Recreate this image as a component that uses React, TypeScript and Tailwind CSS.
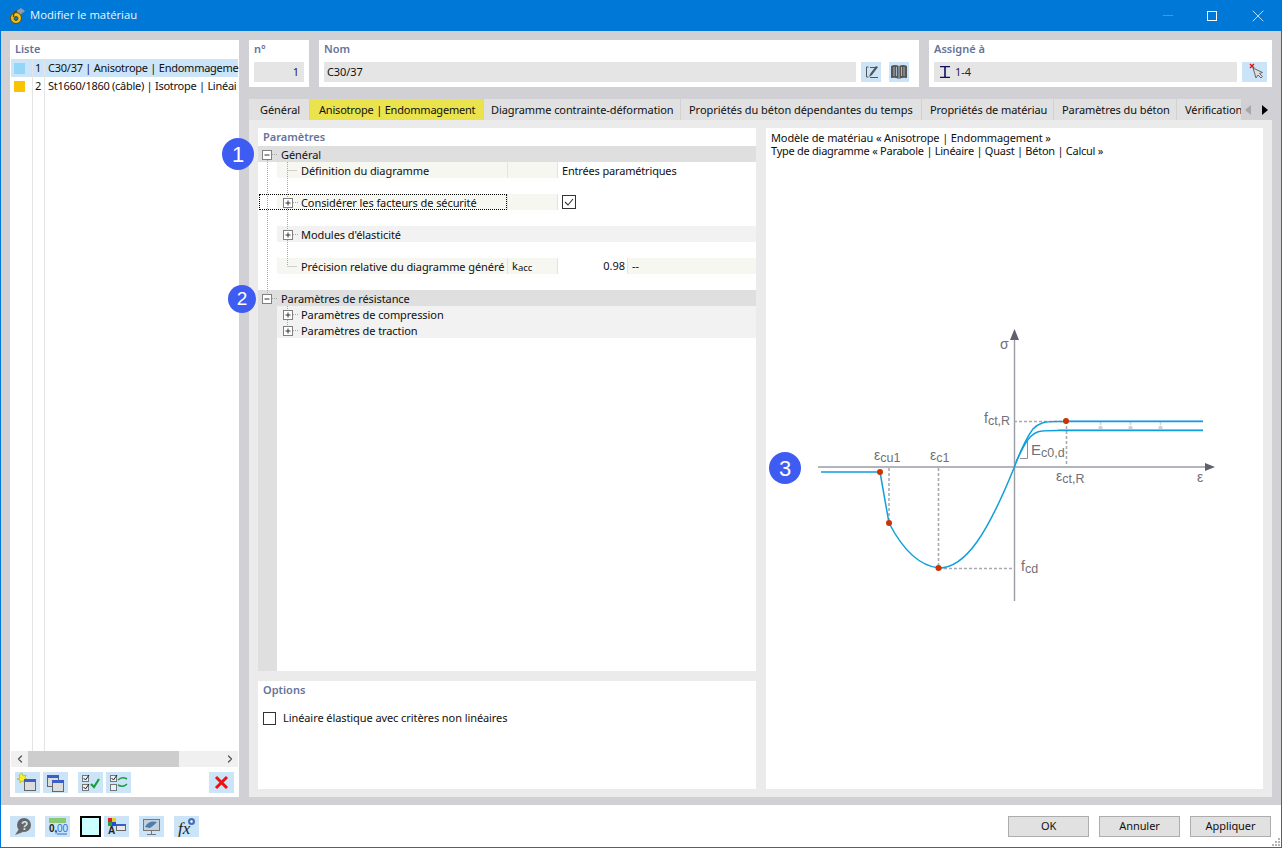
import type { ReactNode } from "react";
import { X, ChevronLeft, ChevronRight } from "lucide-react";

const font = "font-['Noto_Sans','Open_Sans',sans-serif]";

function IconBtn({ children, className = "" }: { children: ReactNode; className?: string }) {
  return (
    <div className={`w-[25px] h-[21px] bg-[#cbe4f8] flex items-center justify-center shrink-0 ${className}`}>
      <svg width="25" height="21" viewBox="0 0 25 21">
        {children}
      </svg>
    </div>
  );
}

function SmallWindow({ x, y }: { x: number; y: number }) {
  return (
    <g>
      <rect x={x + 0.5} y={y + 0.5} width="11" height="11" fill="#dcdcdc" stroke="#666" />
      <rect x={x} y={y} width="12" height="3" fill="#3a5fc8" />
    </g>
  );
}

function SmallCheck({ x, y, on = true }: { x: number; y: number; on?: boolean }) {
  return (
    <g>
      <rect x={x + 0.5} y={y + 0.5} width="6" height="6" fill="#e8f2fa" stroke="#777" />
      {on && <path d={`M${x + 1.5} ${y + 3}l2 2 3.5-5`} fill="none" stroke="#222" />}
    </g>
  );
}

function Section({ label, className = "" }: { label: string; className?: string }) {
  return <div className={`text-[11px] leading-[15px] font-semibold text-[#65739b] ${className}`}>{label}</div>;
}

function TreeName({ children }: { children: ReactNode }) {
  return <span className="text-[11px] tracking-[-0.08px] whitespace-nowrap text-[#101010] pt-[2px]">{children}</span>;
}

function SubRow({ name, sym, value, focus = false }: { name: string; sym?: ReactNode; value?: ReactNode; focus?: boolean }) {
  return (
    <div className="h-4 flex items-center relative">
      <div className="w-[19px] h-full shrink-0" />
      <div className="w-[231px] h-full bg-[#f7f7f2] pl-6 flex items-center border-r border-[#e4e4e0] shrink-0">
        <TreeName>{name}</TreeName>
      </div>
      <div className="w-[50px] h-full bg-[#f7f7f2] pl-[4px] flex items-center border-r border-[#e4e4e0] shrink-0">{sym}</div>
      {value}
      {focus && <div className="absolute left-[1px] top-0 w-[248px] h-4 border border-dotted border-black" />}
    </div>
  );
}

function GroupRow({ name, gutter = "" }: { name: string; gutter?: string }) {
  return (
    <div className="h-4 flex">
      <div className={`w-[19px] h-full ${gutter}`} />
      <div className="flex-1 h-full bg-[#f2f2f2] pl-6 flex items-center">
        <TreeName>{name}</TreeName>
      </div>
    </div>
  );
}

function Head({ name }: { name: string }) {
  return (
    <div className="h-4 bg-[#dfdfdf] pl-[23px] flex items-center">
      <TreeName>{name}</TreeName>
    </div>
  );
}

function Badge({ n, className }: { n: number; className: string }) {
  return (
    <div className={`absolute rounded-full bg-[#3f5cf2] text-white font-['Liberation_Sans',sans-serif] flex items-center justify-center ${className}`}>
      {n}
    </div>
  );
}

function TreeLines() {
  const dots = "#a8a8a8";
  const box = (x: number, y: number, plus: boolean) => (
    <g key={`${x}-${y}`}>
      <rect x={x + 0.5} y={y + 0.5} width="9" height="9" fill="#fff" stroke="#808080" />
      <path d={`M${x + 2.5} ${y + 5}h5`} stroke="#333" />
      {plus && <path d={`M${x + 5} ${y + 2.5}v5`} stroke="#333" />}
    </g>
  );
  return (
    <svg className="absolute left-0 top-[18px] pointer-events-none" width="60" height="200" viewBox="258 146 60 200">
      <g stroke={dots} strokeDasharray="1 1" fill="none">
        <path d="M267.5 160V294M272 154.5h6M272 298.5h6" />
        <path d="M287.5 162V266M287.5 170.5h10M293 202.5h5M293 234.5h5M287.5 266.5h10" />
        <path d="M287.5 306V326M293 314.5h5M293 330.5h5" />
      </g>
      {box(262, 150, false)}
      {box(262, 294, false)}
      {box(283, 198, true)}
      {box(283, 230, true)}
      {box(283, 310, true)}
      {box(283, 326, true)}
    </svg>
  );
}

function Diagram() {
  const lab = "#707078";
  const dash = "#a9a9b2";
  return (
    <svg width="440" height="290" viewBox="790 320 440 290" className="ml-[24px] mt-[163px] shrink-0" fontFamily="Liberation Sans, sans-serif" fill={lab}>
      <path d="M818 467H1206" stroke="#9b9ba6" strokeWidth="1.4" />
      <path d="M1205 463l10 4-10 4z" fill="#60606f" />
      <path d="M1014.5 601V338" stroke="#9b9ba6" strokeWidth="1.4" />
      <path d="M1014.5 329l4.5 11h-9z" fill="#60606f" />
      <g stroke={dash} strokeDasharray="3 2" strokeWidth="1.6" fill="none">
        <path d="M889 468V523M938.5 468V568M939 568.5H1014M1014 421.5H1066M1066.5 421V467" />
        <path d="M1100.5 422V430M1130.5 422V430M1160.5 422V430" stroke="#d4d4d8" />
      </g>
      <g fill="#d0d0d5">
        <circle cx="1100.5" cy="428" r="2.2" />
        <circle cx="1130.5" cy="428" r="2.2" />
        <circle cx="1160.5" cy="428" r="2.2" />
      </g>
      <path d="M1027.5 441V458.5H1020" fill="none" stroke="#8d8d98" />
      <g fill="none" stroke="#119fdc" strokeWidth="1.5">
        <path d="M821 472H880L889 523C904 552 920 566 939 568C966 568 988 532 1014 468C1020 452 1026 438 1033 429C1039 423 1044 421.5 1056 421.5H1203" />
        <path d="M1016 462C1022 450 1028 432 1042 431C1047 430.5 1052 430.5 1058 430.5H1203" />
      </g>
      <path d="M1066 420.5H1203M1058 429.5H1203" stroke="#7cc7ec" fill="none" />
      <g fill="#cc3300">
        <circle cx="880" cy="472" r="3" />
        <circle cx="889" cy="523" r="3" />
        <circle cx="938.5" cy="568" r="3" />
        <circle cx="1066" cy="421" r="3" />
      </g>
      <g fontSize="14">
        <text x="1000" y="349">σ</text>
        <text x="984" y="423">f<tspan fontSize="12.5" dy="2">ct,R</tspan></text>
        <text x="874" y="460">ε<tspan fontSize="12.5" dy="2">cu1</tspan></text>
        <text x="930" y="460">ε<tspan fontSize="12.5" dy="2">c1</tspan></text>
        <text x="1031" y="455" fontSize="15">E<tspan fontSize="12.5" dy="2">c0,d</tspan></text>
        <text x="1056" y="481">ε<tspan fontSize="12.5" dy="2">ct,R</tspan></text>
        <text x="1197" y="482">ε</text>
        <text x="1021" y="571">f<tspan fontSize="12.5" dy="2">cd</tspan></text>
      </g>
    </svg>
  );
}

const tabs = [
  { label: "Général", w: "w-[61px] pl-[11px] tracking-[-0.08px]" },
  { label: "Anisotrope | Endommagement", w: "w-[174px] pl-[9px] tracking-[-0.2px]", active: true },
  { label: "Diagramme contrainte-déformation", w: "w-[197px] pl-[7px] tracking-[-0.08px]" },
  { label: "Propriétés du béton dépendantes du temps", w: "w-[241px] pl-[8px] tracking-[-0.05px]" },
  { label: "Propriétés de matériau", w: "w-[132px] pl-[8px] tracking-[-0.08px]" },
  { label: "Paramètres du béton", w: "w-[123px] pl-[8px] tracking-[-0.08px]" },
  { label: "Vérification", w: "w-[65px] pl-[8px] tracking-[-0.08px]" },
];

export default function App() {
  return (
    <div className={`w-[1282px] h-[848px] relative flex flex-col border border-t-0 border-[#0078d7] bg-white text-[#101010] overflow-hidden ${font}`}>
      {/* Title bar */}
      <div className="h-[31px] bg-[#0078d7] flex items-center shrink-0 pl-2 pr-[13px]">
        <svg width="18" height="18" viewBox="0 0 18 18">
          <path d="M6 5l6-4 4 3-5 4z" fill="#8d9bb0" />
          <circle cx="7" cy="11" r="5.5" fill="#f0c020" stroke="#5d4a00" />
          <circle cx="7" cy="11.5" r="2" fill="#0078d7" stroke="#5d4a00" />
          <path d="M8 4Q4 5 4.5 10" fill="none" stroke="#5d4a00" strokeWidth="1.4" />
        </svg>
        <span className="ml-[3px] text-[11.3px] text-[#eef6fd] font-['Open_Sans',sans-serif]">Modifier le matériau</span>
        <div className="ml-auto flex items-center">
          <div className="w-[10px] h-px bg-[#3b9be3] mr-[34px]" />
          <div className="w-[10px] h-[10px] border border-white mr-[31px]" />
          <X size={20} strokeWidth={0.9} color="#fff" />
        </div>
      </div>

      {/* Body */}
      <div className="h-[774px] bg-[#d1d0d5] flex gap-[10px] pl-[9px] pr-[9px] pt-[9px] pb-2 shrink-0">
        {/* Liste */}
        <div className="w-[229px] bg-white flex flex-col px-px">
          <Section label="Liste" className="h-[19px] pl-[4px] pt-[1px]" />
          <div className="flex-1 relative">
            <div className="h-[18px] bg-[#cce4f7] flex items-center relative text-[11px] tracking-[-0.25px] whitespace-nowrap">
              <div className="w-[11px] h-[11px] bg-[#94d6f7] ml-[3px] shrink-0" />
              <span className="w-[14px] ml-[2px] text-right shrink-0">1</span>
              <span className="ml-[7px]">C30/37 | Anisotrope | Endommageme</span>
            </div>
            <div className="h-[18px] flex items-center relative text-[11px] tracking-[-0.27px] whitespace-nowrap">
              <div className="w-[11px] h-[11px] bg-[#f8c300] ml-[3px] shrink-0" />
              <span className="w-[14px] ml-[2px] text-right shrink-0">2</span>
              <span className="ml-[7px]">St1660/1860 (câble) | Isotrope | Linéai</span>
            </div>
            <div className="absolute left-[21px] top-0 bottom-0 w-px bg-[#e4e4e4]" />
            <div className="absolute left-[33px] top-0 bottom-0 w-px bg-[#e4e4e4]" />
          </div>
          <div className="h-4 bg-[#f0f0f0] flex items-center">
            <div className="w-[17px] flex justify-center"><ChevronLeft size={12} strokeWidth={2.5} color="#555" /></div>
            <div className="w-[151px] h-full bg-[#cdcdcd]" />
            <div className="flex-1 flex justify-end pr-[2px]"><ChevronRight size={12} strokeWidth={2.5} color="#555" /></div>
          </div>
          <div className="h-[30px] flex items-center pl-1">
            <IconBtn>
              <path d="M7 1l1 3 3-1-1 3 2 1-3 1v2l-2-1-2 2 0-3-3-1 3-1-1-3z" fill="#f6f030" stroke="#9c9a20" strokeWidth=".5" />
              <SmallWindow x={9} y={7} />
            </IconBtn>
            <IconBtn className="ml-[3px]">
              <SmallWindow x={4} y={3} />
              <SmallWindow x={9} y={8} />
            </IconBtn>
            <IconBtn className="ml-[10px]">
              <SmallCheck x={4} y={3} />
              <SmallCheck x={4} y={12} />
              <path d="M13 12l3 3 5-8" fill="none" stroke="#18a040" strokeWidth="2.2" />
            </IconBtn>
            <IconBtn className="ml-[3px]">
              <SmallCheck x={4} y={3} />
              <SmallCheck x={4} y={12} on={false} />
              <path d="M12 8q4-4 9-1M21 12q-4 4-9 1" fill="none" stroke="#18a040" strokeWidth="1.5" />
            </IconBtn>
            <IconBtn className="ml-[78px]">
              <path d="M7 5l11 11M18 5L7 16" stroke="#ee1111" strokeWidth="3" />
            </IconBtn>
          </div>
        </div>

        {/* Right side */}
        <div className="w-[1023px] flex flex-col">
          <div className="h-[47px] flex gap-[10px]">
            <div className="w-[60px] bg-white px-[5px] pt-[1px]">
              <Section label="n°" className="h-[21px]" />
              <div className="h-5 bg-[#e5e5e5] text-right pr-[5px] text-[11px] leading-5 text-[#2d1a4a]">1</div>
            </div>
            <div className="w-[600px] bg-white px-[5px] pt-[1px]">
              <Section label="Nom" className="h-[21px]" />
              <div className="flex">
                <div className="w-[532px] h-5 bg-[#e5e5e5] pl-[3px] text-[11px] leading-5 tracking-[-0.08px]">C30/37</div>
                <div className="ml-[5px] w-5 h-5 bg-[#cbe4f8]">
                  <svg width="20" height="20" viewBox="0 0 20 20">
                    <path d="M5.5 5v10M5.5 5h2M5.5 15h2M9 15.5h8M9 5.5h7" fill="none" stroke="#555" />
                    <path d="M15 4l-6 8-1 3 3-2 6-8z" fill="#555" />
                  </svg>
                </div>
                <div className="ml-2 w-5 h-5 bg-[#cbe4f8]">
                  <svg width="20" height="20" viewBox="0 0 20 20">
                    <path d="M2 4q4-2 8 0 4-2 8 0v12q-4-1-8 1-4-2-8-1z" fill="#555" />
                    <path d="M10 4v13M5 5v9M7.5 5v9M12.5 5v9M15 5v9" stroke="#cbe4f8" strokeWidth=".7" />
                  </svg>
                </div>
              </div>
            </div>
            <div className="w-[343px] bg-white px-[5px] pt-[1px]">
              <Section label="Assigné à" className="h-[21px]" />
              <div className="flex">
                <div className="w-[303px] h-5 bg-[#e5e5e5] flex items-center pl-[6px] text-[11px] text-[#2d1a4a]">
                  <svg width="10" height="12" viewBox="0 0 10 12">
                    <path d="M0 .7h10M0 11.3h10" stroke="#101060" strokeWidth="1.3" />
                    <path d="M5 1v10" stroke="#101060" strokeWidth="1.6" />
                  </svg>
                  <span className="ml-[5px]">1-4</span>
                </div>
                <div className="ml-[5px] w-[25px] h-5 bg-[#cbe4f8]">
                  <svg width="25" height="20" viewBox="0 0 25 20">
                    <path d="M11 6l3 10 2-3 3 3 1.5-1.5-3-3 3-1z" fill="#ddd" stroke="#666" />
                    <path d="M8 2l4 4M12 2L8 6" stroke="#e01010" strokeWidth="1.4" />
                  </svg>
                </div>
              </div>
            </div>
          </div>

          {/* Tabs */}
          <div className="h-[21px] mt-3 flex items-stretch relative">
            {tabs.map((t) => (
              <div
                key={t.label}
                className={`${t.w} shrink-0 overflow-hidden whitespace-nowrap text-[11px] leading-[21px] border-r border-[#d1d0d5] ${t.active ? "bg-[#ebe34d]" : "bg-[#e1e1e1]"}`}
              >
                {t.label}
              </div>
            ))}
            <div className="ml-[3px] flex items-center gap-[7px]">
              <div className="w-0 h-0 border-y-[5px] border-y-transparent border-r-[6px] border-r-[#a8a8a8]" />
              <div className="ml-1 w-0 h-0 border-y-[5px] border-y-transparent border-l-[6px] border-l-black" />
            </div>
          </div>

          {/* Tab panel */}
          <div className="flex-1 bg-[#ebebeb] px-[9px] pt-2 pb-2 flex gap-[10px] min-h-0">
            <div className="w-[498px] flex flex-col gap-[10px]">
              <div className="h-[543px] bg-white relative flex flex-col">
                <Section label="Paramètres" className="h-[18px] pl-[5px] pt-[1px]" />
                <Head name="Général" />
                <SubRow
                  name="Définition du diagramme"
                  value={<span className="pl-[4px] pt-[2px] text-[11px] tracking-[-0.17px] whitespace-nowrap">Entrées paramétriques</span>}
                />
                <div className="h-4" />
                <SubRow
                  name="Considérer les facteurs de sécurité"
                  focus
                  value={
                    <div className="ml-[4px] -mt-[1px] w-[14px] h-[14px] border border-[#333] flex items-center justify-center">
                      <svg width="10" height="8" viewBox="0 0 10 8">
                        <path d="M1 4l3 3 5-6" fill="none" stroke="#333" strokeWidth="1.1" />
                      </svg>
                    </div>
                  }
                />
                <div className="h-4" />
                <GroupRow name="Modules d'élasticité" />
                <div className="h-4" />
                <SubRow
                  name="Précision relative du diagramme généré"
                  sym={<span className="text-[11px] leading-none">k<span className="text-[9.5px] relative top-px">acc</span></span>}
                  value={
                    <div className="flex-1 h-full flex items-center text-[11px]">
                      <div className="w-[70px] h-full text-right pr-[2px] leading-4 border-r border-[#e4e4e0]">0.98</div>
                      <div className="flex-1 h-full bg-[#f7f7f2] pl-[4px] leading-4">--</div>
                    </div>
                  }
                />
                <div className="h-4" />
                <Head name="Paramètres de résistance" />
                <GroupRow name="Paramètres de compression" gutter="bg-[#dfdfdf]" />
                <GroupRow name="Paramètres de traction" gutter="bg-[#dfdfdf]" />
                <div className="flex-1 w-[19px] bg-[#dfdfdf]" />
                <TreeLines />
              </div>
              <div className="flex-1 bg-white">
                <Section label="Options" className="h-[29px] pl-[5px] pt-[1px]" />
                <div className="flex items-center pl-[5px]">
                  <div className="w-[13px] h-[13px] border border-[#333]" />
                  <span className="ml-[7px] text-[11px] tracking-[-0.08px] whitespace-nowrap">Linéaire élastique avec critères non linéaires</span>
                </div>
              </div>
            </div>
            <div className="w-[497px] bg-white pt-[3px]">
              <div className="pl-[5px] text-[11px] leading-[13px] whitespace-nowrap">
                <div className="tracking-[-0.12px]">Modèle de matériau « Anisotrope | Endommagement »</div>
                <div className="tracking-[-0.26px]">Type de diagramme « Parabole | Linéaire | Quast | Béton | Calcul »</div>
              </div>
              <Diagram />
            </div>
          </div>
        </div>
      </div>

      {/* Footer */}
      <div className="flex-1 flex items-center pl-[9px] pr-[10px] relative">
        <IconBtn>
          <circle cx="14" cy="9" r="7" fill="#666" />
          <path d="M5 19l4-6 4 3z" fill="#666" />
          <text x="11" y="13.5" fontSize="12" fontWeight="700" fill="#cbe4f8" fontFamily="Liberation Sans, sans-serif">?</text>
        </IconBtn>
        <IconBtn className="ml-[10px]">
          <rect x="4" y="2" width="17" height="5" fill="#8cc870" />
          <text x="4" y="16" fontSize="10" fontWeight="700" fill="#222" fontFamily="Liberation Sans, sans-serif">0,</text>
          <text x="12" y="16" fontSize="10" fill="#2a6fd6" fontFamily="Liberation Sans, sans-serif">00</text>
          <path d="M12 18h10" stroke="#2a6fd6" />
        </IconBtn>
        <div className="ml-[10px] w-[21px] h-[21px] border-2 border-black bg-[#ccffff] shrink-0" />
        <IconBtn className="ml-[3px]">
          <rect x="4" y="2" width="4" height="4" fill="#e02020" />
          <rect x="8" y="2" width="4" height="4" fill="#e0d020" />
          <rect x="4" y="6" width="4" height="4" fill="#20a040" />
          <rect x="8" y="6" width="4" height="4" fill="#2050d0" />
          <text x="4" y="18" fontSize="10" fontWeight="700" fill="#222" fontFamily="Liberation Sans, sans-serif">A</text>
          <rect x="12.5" y="8.5" width="9" height="6" fill="#e8e8e8" stroke="#666" />
          <rect x="12" y="8" width="10" height="2" fill="#3a5fc8" />
        </IconBtn>
        <IconBtn className="ml-[10px]">
          <rect x="4.5" y="3.5" width="16" height="11" fill="#c4d0dc" stroke="#777" />
          <path d="M6 11q4-7 12-5l-3 3-4 3z" fill="#4a7db0" />
          <path d="M12.5 15v3M8 18.5h9" stroke="#777" />
        </IconBtn>
        <IconBtn className="ml-[10px]">
          <text x="4" y="18" fontSize="17" fontStyle="italic" fill="#222" fontFamily="Liberation Serif, serif">fx</text>
          <circle cx="17.5" cy="5.5" r="3.5" fill="#4a6fb0" />
          <circle cx="17.5" cy="5.5" r="1.2" fill="#fff" />
        </IconBtn>
        <div className="ml-auto flex gap-[10px]">
          {["OK", "Annuler", "Appliquer"].map((b) => (
            <div key={b} className="w-[81px] h-[21px] bg-[#e1e1e1] border border-[#adadad] text-[11px] tracking-[-0.08px] flex items-center justify-center">
              {b}
            </div>
          ))}
        </div>
        {/* size grip */}
        <svg className="absolute right-0 bottom-0" width="10" height="10" viewBox="0 0 10 10" fill="#b5b5b5">
          <rect x="7" y="1" width="2" height="2" />
          <rect x="4" y="4" width="2" height="2" />
          <rect x="7" y="4" width="2" height="2" />
          <rect x="1" y="7" width="2" height="2" />
          <rect x="4" y="7" width="2" height="2" />
          <rect x="7" y="7" width="2" height="2" />
        </svg>
      </div>

      <Badge n={1} className="w-8 h-8 text-[22px] left-[221px] top-[138px]" />
      <Badge n={2} className="w-7 h-7 text-[19px] left-[227px] top-[285px]" />
      <Badge n={3} className="w-8 h-8 text-[22px] left-[768px] top-[452px]" />
    </div>
  );
}
